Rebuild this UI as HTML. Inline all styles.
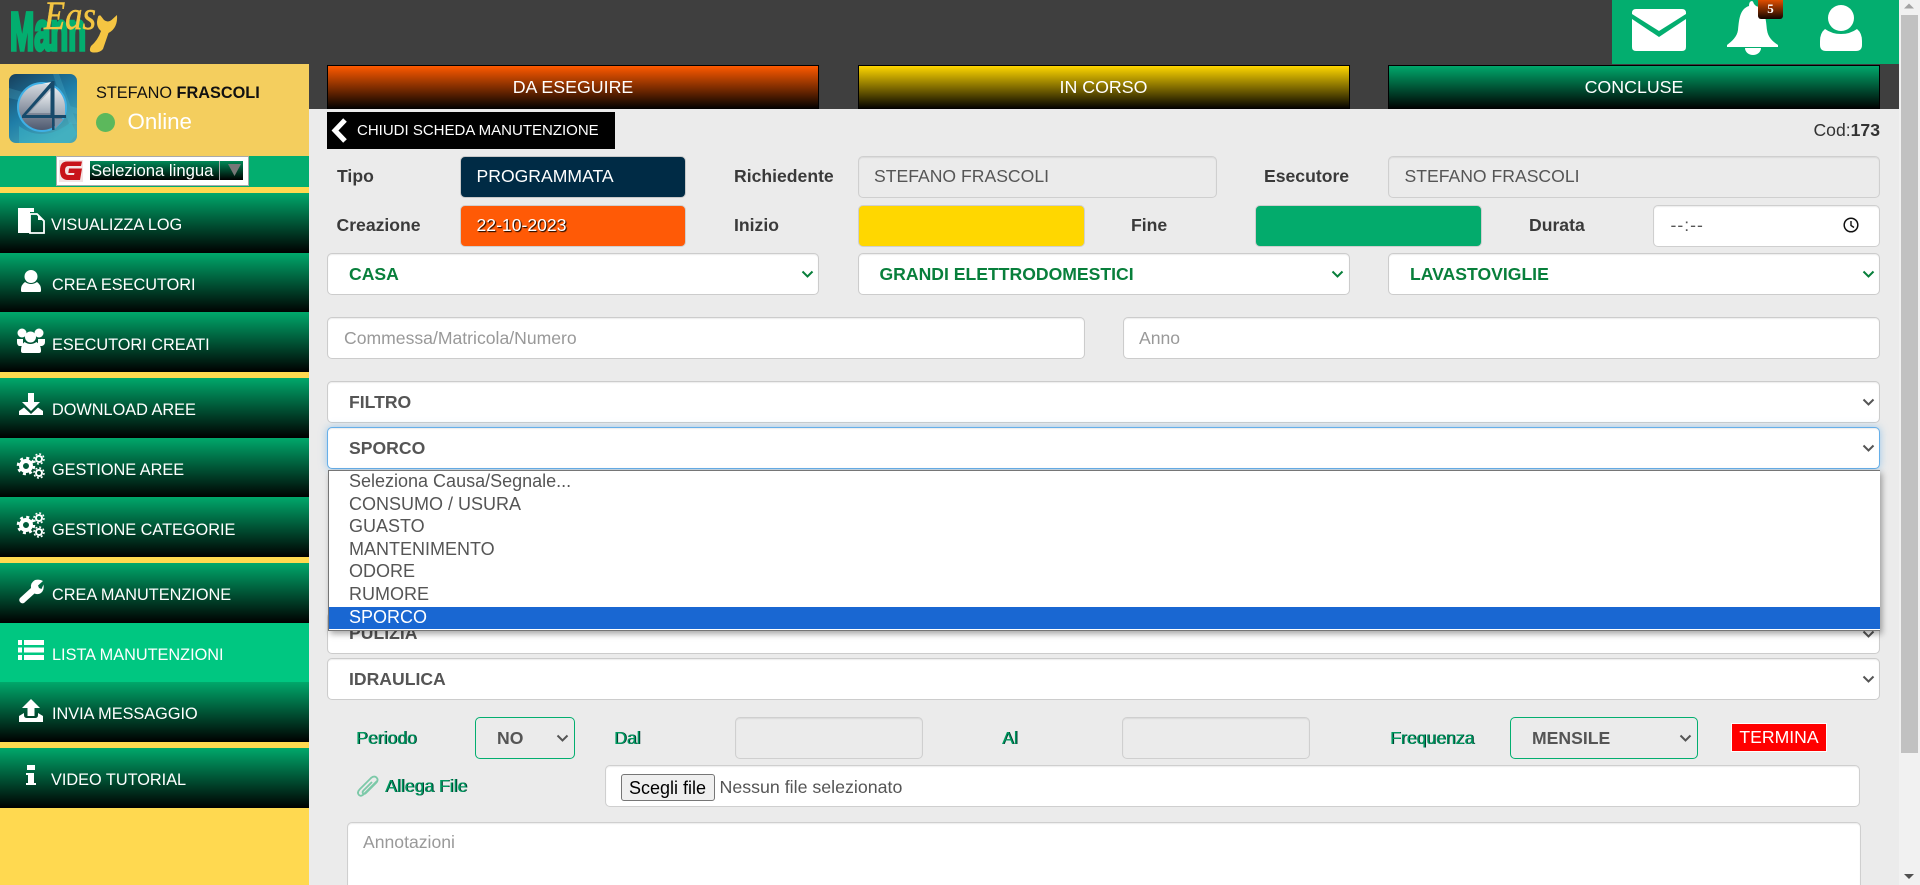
<!DOCTYPE html>
<html lang="it">
<head>
<meta charset="utf-8">
<title>Easy Mann</title>
<style>
*{box-sizing:border-box}
html,body{margin:0;padding:0;width:1920px;height:885px;overflow:hidden;background:#ebebeb;font-family:"Liberation Sans",sans-serif;color:#333}
#w{position:relative;width:1920px;height:885px;overflow:hidden}
.a{position:absolute}
.menu{position:absolute;left:0;width:309px;height:60px;background:linear-gradient(#00a86b,#000);color:#fff;font-size:16.3px}
.menu span{position:absolute;left:52px;top:0;line-height:65px;white-space:nowrap}
.menu svg{position:absolute;left:0;top:0}
.active{background:#00c781}
.tab{position:absolute;top:65px;height:44px;width:492px;border:1px solid #000;border-bottom:0;color:#fff;font-size:17.8px;text-align:center;line-height:42px}
.lab{position:absolute;font-size:17.6px;font-weight:bold;color:#3a3a3a;white-space:nowrap;height:42px;line-height:42px}
.box{position:absolute;height:42px;border:1px solid #cfcfcf;border-radius:5px;font-size:17.6px;line-height:39px;padding-left:15.500px;color:#555;box-shadow:inset 0 1px 1px rgba(0,0,0,.075);white-space:nowrap}
select.s{position:absolute;appearance:none;-webkit-appearance:none;height:42px;border:1px solid #ccc;border-radius:5px;background-color:#fff;color:#555;font:bold 17.6px "Liberation Sans",sans-serif;padding:0 12px 0 21px;box-shadow:inset 0 1px 1px rgba(0,0,0,.075);outline:0}
select.g{color:#087f3b}
select.p{background-color:transparent;border-color:#03ae6f;box-shadow:none}
svg.c{position:absolute;width:13px;height:9px;pointer-events:none}
input.i{position:absolute;height:42px;border:1px solid #ccc;border-radius:5px;background:#fff;font:17.6px "Liberation Sans",sans-serif;color:#555;padding:0 16px;box-shadow:inset 0 1px 1px rgba(0,0,0,.075);outline:0}
input.i::placeholder{color:#999;opacity:1}
.gl{position:absolute;font-size:17.6px;color:#009a60;text-shadow:1px 0 0 #013a30;white-space:nowrap;height:42px;line-height:42px}
.opt{height:22.5px;line-height:21px;padding-left:20px;font-size:18px;color:#555}
</style>
</head>
<body>
<div id="w">
<!-- top bar -->
<div class="a" style="left:0;top:0;width:1899px;height:109px;background:#3f3f3f"></div>
<svg class="a" style="left:0;top:0" width="130" height="64" viewBox="0 0 130 64">
  <text x="10" y="50" font-family="Liberation Sans" font-weight="bold" font-size="54" fill="#03ae6f" stroke="#03ae6f" stroke-width="3.500" textLength="76" lengthAdjust="spacingAndGlyphs">Mann</text>
  <text x="44" y="29" font-family="Liberation Serif" font-style="italic" font-size="40" fill="#f4c542" stroke="#f4c542" stroke-width=".5" textLength="52" lengthAdjust="spacingAndGlyphs">Eas</text>
  <path d="M98 17 Q95 26 101 31 Q98 40 91 46 Q88 52 93 52.500 Q100 53 103 49 L108.500 33 Q118 28 117 15 L111.500 20 Q108 23 104 20 L100.500 15.500 Q98.500 15 98 17Z" fill="#f5c542"/>
</svg>
<!-- header right -->
<div class="a" style="left:1612px;top:0;width:287px;height:64px;background:#03ae6f"></div>
<svg class="a" style="left:1612px;top:0" width="287" height="64" viewBox="0 0 287 64" fill="#fff">
  <path d="M20 13 Q20 9 24 9 H70 Q74 9 74 13 V14 L47 31 L20 14Z"/>
  <path d="M20 19 L47 37 L74 19 V47 Q74 51 70 51 H24 Q20 51 20 47Z"/>
  <path d="M142 4 Q141 1 140 1 Q137 1 137 6 C127 9 127 22 126 30 C125 37 120 41 115 45 L115 47 H166 L166 45 C160 41 156 37 155 30 C154 22 154 9 144 6Z"/>
  <path d="M133 48 A8 7 0 0 0 149 48Z" fill="#fff"/>
  <circle cx="229" cy="18" r="13"/>
  <path d="M213 29 Q220 34 229 34 Q238 34 245 29 Q250 33 250 41 V45 Q250 51 244 51 H214 Q208 51 208 45 V41 Q208 33 213 29Z"/>
</svg>
<div class="a" style="left:1758px;top:0;width:25px;height:19px;border-radius:0 0 3px 3px;background:linear-gradient(#e04d00,#110500);color:#fff;font:bold 13px/17px 'Liberation Serif',serif;text-align:center">5</div>

<!-- sidebar -->
<div class="a" style="left:0;top:64px;width:309px;height:821px;background:#ffd950"></div>
<div class="a" style="left:0;top:64px;width:309px;height:92px;background:#f4ce5e"></div>
<svg class="a" style="left:9px;top:74px" width="68" height="69" viewBox="0 0 68 69">
  <defs>
    <linearGradient id="bg" x1="0" y1="0" x2="0.6" y2="1"><stop offset="0" stop-color="#173f5c"/><stop offset=".55" stop-color="#1f7ea8"/><stop offset="1" stop-color="#4aa7b4"/></linearGradient>
    <linearGradient id="sl" x1="0" y1="0" x2="0" y2="1"><stop offset="0" stop-color="#d4d9df"/><stop offset="1" stop-color="#4f5a70"/></linearGradient>
    <linearGradient id="sr" x1="0" y1="0" x2="0" y2="1"><stop offset="0" stop-color="#f2f4f6"/><stop offset="1" stop-color="#a0aab6"/></linearGradient>
  </defs>
  <rect width="68" height="69" rx="7" fill="url(#bg)"/>
  <path d="M0 14 L68 34 V40 L0 24Z M50 0 L68 50 H60 L44 0Z" fill="#5cc4dc" opacity=".22"/>
  <path d="M10 52 Q34 70 62 48 L68 60 L60 69 H10Z" fill="#3bbccf" opacity=".45"/>
  <circle cx="33" cy="33" r="25" fill="#3fb0e6"/>
  <circle cx="33" cy="33" r="23" fill="url(#sl)"/>
  <path d="M33 10 A23 23 0 0 1 56 33 L56 41 H44 V8 Q40 8 33 10Z" fill="url(#sr)"/>
  <path d="M42 16 V39 H20Z" fill="url(#sr)"/>
  <path d="M43 7 L45.500 7 V41 H57 V44 H45.500 V56 H43 V44 H13 V41.500Z M41.500 14 L17 41 H41.500Z" fill="#174a6b" fill-rule="evenodd"/>
  <path d="M46 45 H55 L46 55Z" fill="#7f93a6"/>
</svg>
<div class="a" style="left:96px;top:83px;font-size:16.3px;color:#111;line-height:20px;white-space:nowrap">STEFANO <b>FRASCOLI</b></div>
<div class="a" style="left:96px;top:112.500px;width:19px;height:19px;border-radius:50%;background:#5cb85c"></div>
<div class="a" style="left:127.500px;top:108px;font-size:22.3px;color:#fff;line-height:28px">Online</div>

<div class="a" style="left:0;top:156px;width:309px;height:31px;background:#03ae6f"></div>
<div class="a" style="left:0;top:187px;width:309px;height:6px;background:#ffd950"></div>
<div class="a" style="left:56px;top:156px;width:193px;height:30px;background:#fff;border:1px solid #aaa"></div>
<svg class="a" style="left:59px;top:160px" width="24" height="22" viewBox="0 0 24 22">
  <rect width="24" height="22" fill="#f3e4e4"/>
  <path d="M23 1.500 H8 Q1 1.500 1 10.500 Q1 20 9 20 H21 L23 8.500 H10 L9.300 13 H15.500 L15 15 H9.500 Q6 15 6 10.500 Q6 6 9.500 6 H22Z" fill="#c8141a"/>
</svg>
<div class="a" style="left:90px;top:161px;width:153px;height:19px;background:linear-gradient(#008a58,#000);color:#fff;font-size:16.7px;line-height:20px;padding-left:1px;white-space:nowrap">Seleziona lingua</div>
<div class="a" style="left:219px;top:161px;width:1px;height:19px;background:#aaa"></div>
<svg class="a" style="left:228px;top:164px" width="14" height="13"><path d="M0 0H13L6.500 12Z" fill="#777"/></svg>

<div class="menu" style="top:193px">
  <svg width="60" height="60" fill="#fff"><path d="M18 15 H34 V19 H30 V40 H18Z"/><path d="M30 21 H37 L44 28 V40 H30Z" fill="none" stroke="#fff" stroke-width="1.800"/><path d="M38 21 L44 27 H38Z"/></svg>
  <span style="left:51px">VISUALIZZA LOG</span>
</div>
<div class="menu" style="top:253px">
  <svg width="60" height="60" fill="#fff"><circle cx="31" cy="23.500" r="6.500"/><path d="M25 29 Q31 33 37 29 Q41 32 41 36 V38 Q41 39 39 39 H23 Q21 39 21 38 V36 Q21 32 25 29Z"/></svg>
  <span>CREA ESECUTORI</span>
</div>
<div class="menu" style="top:312px">
  <svg width="60" height="60" fill="#fff"><circle cx="22" cy="21" r="4.500"/><circle cx="39" cy="21" r="4.500"/><path d="M17 27 H23 V34 H19 Q17 33 17 30Z M38 27 H45 V30 Q45 33 42 34 H38Z"/><circle cx="30.500" cy="25" r="5.500"/><path d="M24.500 30 Q30.500 34 36.500 30 Q41 33 41 38 V39 Q41 41 39 41 H23 Q21 41 21 39 V38 Q21 33 24.500 30Z"/></svg>
  <span style="line-height:66px">ESECUTORI CREATI</span>
</div>
<div class="a" style="left:0;top:372px;width:309px;height:6px;background:#ffd950"></div>
<div class="menu" style="top:378px">
  <svg width="60" height="60" fill="#fff"><path d="M28 15 H34 V24 H40 L31 33 L22 24 H28Z"/><path d="M19 33 L24 29.500 L31 36 L38 29.500 L43 33 V37 H19Z"/></svg>
  <span>DOWNLOAD AREE</span>
</div>
<div class="menu" style="top:438px">
  <svg width="60" height="60" fill="none" stroke="#fff"><g id="cg"><circle cx="26" cy="28" r="5" stroke-width="4"/><circle cx="26" cy="28" r="8" stroke-width="2.500" stroke-dasharray="3 3.280"/><circle cx="39" cy="21" r="3" stroke-width="2"/><circle cx="39" cy="21" r="5" stroke-width="1.500" stroke-dasharray="2 1.930"/><circle cx="39" cy="35" r="3" stroke-width="2"/><circle cx="39" cy="35" r="5" stroke-width="1.500" stroke-dasharray="2 1.930"/></g></svg>
  <span>GESTIONE AREE</span>
</div>
<div class="menu" style="top:497px">
  <svg width="60" height="60" fill="none" stroke="#fff"><use href="#cg"/></svg>
  <span style="line-height:66px">GESTIONE CATEGORIE</span>
</div>
<div class="a" style="left:0;top:557px;width:309px;height:6px;background:#ffd950"></div>
<div class="menu" style="top:563px">
  <svg width="60" height="60" fill="#fff"><path d="M35 17 Q40 16 43 18 L38 22.500 L39 25 L41.500 26 L43.500 21.500 Q44.500 27 41 30 Q38 32 34.500 30.500 L24 40 Q21.500 41 20 39 Q18.500 37 20 35 L31 25 Q30 20 35 17Z"/></svg>
  <span>CREA MANUTENZIONE</span>
</div>
<div class="menu active" style="top:623px;height:59px">
  <svg width="60" height="60" fill="#fff"><path d="M18 17 H22 V22 H18Z M24 17 H44 V22 H24Z M18 24.500 H22 V29.500 H18Z M24 24.500 H44 V29.500 H24Z M18 32 H22 V37 H18Z M24 32 H44 V37 H24Z"/></svg>
  <span style="line-height:64px">LISTA MANUTENZIONI</span>
</div>
<div class="menu" style="top:682px">
  <svg width="60" height="60" fill="#fff"><path d="M31 17 L40 26 H34.500 V34 H27.500 V26 H22Z"/><path d="M19 34 L24 31 V33 Q24 36 27 36 H35 Q38 36 38 33 V31 L43 34 V40 H19Z"/></svg>
  <span>INVIA MESSAGGIO</span>
</div>
<div class="a" style="left:0;top:742px;width:309px;height:6px;background:#ffd950"></div>
<div class="menu" style="top:748px">
  <svg width="60" height="60" fill="#fff"><path d="M27 17 H35 V22 H27Z M26 25 H34 V35 H36 V37 H26 V35 H28 V27 H26Z"/></svg>
  <span style="left:51px">VIDEO TUTORIAL</span>
</div>

<!-- tabs -->
<div class="tab" style="left:327px;background:linear-gradient(#ff5a00,#000)">DA ESEGUIRE</div>
<div class="tab" style="left:857.500px;background:linear-gradient(#ffd700,#000)">IN CORSO</div>
<div class="tab" style="left:1388px;background:linear-gradient(#00a86b,#000)">CONCLUSE</div>

<!-- chiudi -->
<div class="a" style="left:327px;top:112px;width:288px;height:37px;background:#000;color:#fff;font-size:15px;line-height:37px;padding-left:30px;white-space:nowrap">CHIUDI SCHEDA MANUTENZIONE</div>
<svg class="a" style="left:330px;top:118px" width="20" height="26"><path d="M15 2 L5 12.500 L15 23" fill="none" stroke="#fff" stroke-width="5"/></svg>
<div class="a" style="right:40px;top:120px;font-size:17.6px;line-height:21px;color:#333">Cod:<b>173</b></div>

<!-- row 1 -->
<div class="lab" style="left:337px;top:155px">Tipo</div>
<div class="box" style="left:460px;top:156px;width:226px;background:#002b45;color:#fff;box-shadow:none;border-color:#c8c8c8">PROGRAMMATA</div>
<div class="lab" style="left:734px;top:155px">Richiedente</div>
<div class="box" style="left:857.500px;top:156px;width:359.500px;background:#ebebeb">STEFANO FRASCOLI</div>
<div class="lab" style="left:1264px;top:155px">Esecutore</div>
<div class="box" style="left:1388px;top:156px;width:492px;background:#ebebeb">STEFANO FRASCOLI</div>

<!-- row 2 -->
<div class="lab" style="left:336.500px;top:204px">Creazione</div>
<div class="box" style="left:460px;top:205px;width:226px;background:#ff5a06;color:#fff;text-shadow:1px 1px 1px #000;box-shadow:none">22-10-2023</div>
<div class="lab" style="left:734px;top:204px">Inizio</div>
<div class="box" style="left:857.500px;top:205px;width:227.500px;background:#ffd700;box-shadow:none"></div>
<div class="lab" style="left:1131px;top:204px">Fine</div>
<div class="box" style="left:1255px;top:205px;width:227px;background:#03ab6c;box-shadow:none"></div>
<div class="lab" style="left:1529px;top:204px">Durata</div>
<div class="box" style="left:1652.500px;top:205px;width:227.500px;background:#fff;letter-spacing:1px;padding-left:17px">--:--</div>
<svg class="a" style="left:1842px;top:216px" width="18" height="18" viewBox="0 0 18 18"><circle cx="9" cy="9" r="6.800" fill="none" stroke="#111" stroke-width="1.500"/><path d="M9 5 V9.500 L12 11.500" fill="none" stroke="#111" stroke-width="1.400"/></svg>

<!-- selects -->
<select class="s g" style="left:327px;top:253px;width:492px"><option>CASA</option></select>
<svg class="c" style="left:800.500px;top:270px" viewBox="0 0 13 9"><path d="M1.500 1.500 L6.500 6.500 L11.500 1.500" fill="none" stroke="#087f3b" stroke-width="2"/></svg>
<select class="s g" style="left:857.500px;top:253px;width:492px"><option>GRANDI ELETTRODOMESTICI</option></select>
<svg class="c" style="left:1331px;top:270px" viewBox="0 0 13 9"><path d="M1.500 1.500 L6.500 6.500 L11.500 1.500" fill="none" stroke="#087f3b" stroke-width="2"/></svg>
<select class="s g" style="left:1388px;top:253px;width:492px"><option>LAVASTOVIGLIE</option></select>
<svg class="c" style="left:1861.500px;top:270px" viewBox="0 0 13 9"><path d="M1.500 1.500 L6.500 6.500 L11.500 1.500" fill="none" stroke="#087f3b" stroke-width="2"/></svg>

<input class="i" style="left:327px;top:317px;width:758px" placeholder="Commessa/Matricola/Numero">
<input class="i" style="left:1123px;top:317px;width:757px;padding-left:15px" placeholder="Anno">

<select class="s" style="left:327px;top:381px;width:1553px"><option>FILTRO</option></select>
<svg class="c" style="left:1861.500px;top:398px" viewBox="0 0 13 9"><path d="M1.500 1.500 L6.500 6.500 L11.500 1.500" fill="none" stroke="#555" stroke-width="2"/></svg>
<select class="s" style="left:327px;top:427px;width:1553px;border-color:#66afe9;box-shadow:inset 0 1px 1px rgba(0,0,0,.075),0 0 8px rgba(102,175,233,.6)"><option>SPORCO</option></select>
<svg class="c" style="left:1861.500px;top:444px" viewBox="0 0 13 9"><path d="M1.500 1.500 L6.500 6.500 L11.500 1.500" fill="none" stroke="#555" stroke-width="2"/></svg>
<select class="s" style="left:327px;top:612px;width:1553px"><option>PULIZIA</option></select>
<svg class="c" style="left:1861.500px;top:630px" viewBox="0 0 13 9"><path d="M1.500 1.500 L6.500 6.500 L11.500 1.500" fill="none" stroke="#555" stroke-width="2"/></svg>
<select class="s" style="left:327px;top:658px;width:1553px"><option>IDRAULICA</option></select>
<svg class="c" style="left:1861.500px;top:675px" viewBox="0 0 13 9"><path d="M1.500 1.500 L6.500 6.500 L11.500 1.500" fill="none" stroke="#555" stroke-width="2"/></svg>

<!-- dropdown -->
<div class="a" style="left:328px;top:470px;width:1552px;height:161px;background:#fff;border:1px solid #767676;border-right:0;box-shadow:2px 3px 6px rgba(0,0,0,.35)">
  <div class="opt">Seleziona Causa/Segnale...</div>
  <div class="opt">CONSUMO / USURA</div>
  <div class="opt">GUASTO</div>
  <div class="opt">MANTENIMENTO</div>
  <div class="opt">ODORE</div>
  <div class="opt">RUMORE</div>
  <div class="opt" style="background:#1967d2;color:#fff;margin-top:1px;height:22px;line-height:20px">SPORCO</div>
</div>

<!-- period row -->
<div class="gl" style="left:356px;top:717px">Periodo</div>
<select class="s p" style="left:475px;top:717px;width:100px"><option>NO</option></select>
<svg class="c" style="left:556px;top:734px" viewBox="0 0 13 9"><path d="M1.500 1.500 L6.500 6.500 L11.500 1.500" fill="none" stroke="#555" stroke-width="2"/></svg>
<div class="gl" style="left:614px;top:717px">Dal</div>
<div class="box" style="left:734.500px;top:717px;width:188px;background:#ebebeb"></div>
<div class="gl" style="left:1002px;top:717px">Al</div>
<div class="box" style="left:1122px;top:717px;width:188px;background:#ebebeb"></div>
<div class="gl" style="left:1390px;top:717px">Frequenza</div>
<select class="s p" style="left:1510px;top:717px;width:188px"><option>MENSILE</option></select>
<svg class="c" style="left:1678.500px;top:734px" viewBox="0 0 13 9"><path d="M1.500 1.500 L6.500 6.500 L11.500 1.500" fill="none" stroke="#555" stroke-width="2"/></svg>
<div class="a" style="left:1731px;top:723px;width:96px;height:29px;background:#f00;border:1px solid #fff;color:#fff;font-size:17.6px;line-height:26px;text-align:center">TERMINA</div>

<!-- attach -->
<svg class="a" style="left:355px;top:774px" width="26" height="26" viewBox="0 0 26 26"><path d="M22 7 L9 20 Q6 23 4 21 Q1.500 18.500 5 15 L16 4 Q19 1.500 21.500 3.500 Q24 6 21 9 L11 19 Q9 20.500 8 19.500 Q7 18 8.500 16.500 L17 8" fill="none" stroke="#7cc9a8" stroke-width="1.800"/></svg>
<div class="gl" style="left:385px;top:765px">Allega File</div>
<div class="box" style="left:605px;top:765px;width:1255px;background:#fff"></div>
<div class="a" style="left:620.500px;top:774px;width:94px;height:27px;background:#efefef;border:1px solid #767676;border-radius:3px;color:#000;font-size:18px;line-height:26px;text-align:center;white-space:nowrap">Scegli file</div>
<div class="a" style="left:719.500px;top:774px;font-size:17.8px;line-height:27px;color:#555;white-space:nowrap">Nessun file selezionato</div>

<div class="box" style="left:347px;top:822px;width:1514px;height:100px;background:#fff;color:#999;padding-left:15px;line-height:38px">Annotazioni</div>

<!-- scrollbar -->
<div class="a" style="left:1899px;top:0;width:21px;height:885px;background:#f1f1f1"></div>
<div class="a" style="left:1901px;top:15px;width:17px;height:738px;background:#c1c1c1"></div>
<svg class="a" style="left:1899px;top:0" width="21" height="15"><path d="M5 8.500 H15 L10 3.500Z" fill="#a3a3a3"/></svg>
<svg class="a" style="left:1899px;top:870px" width="21" height="15"><path d="M5 4 H15 L10 9Z" fill="#505050"/></svg>
</div>
</body>
</html>
